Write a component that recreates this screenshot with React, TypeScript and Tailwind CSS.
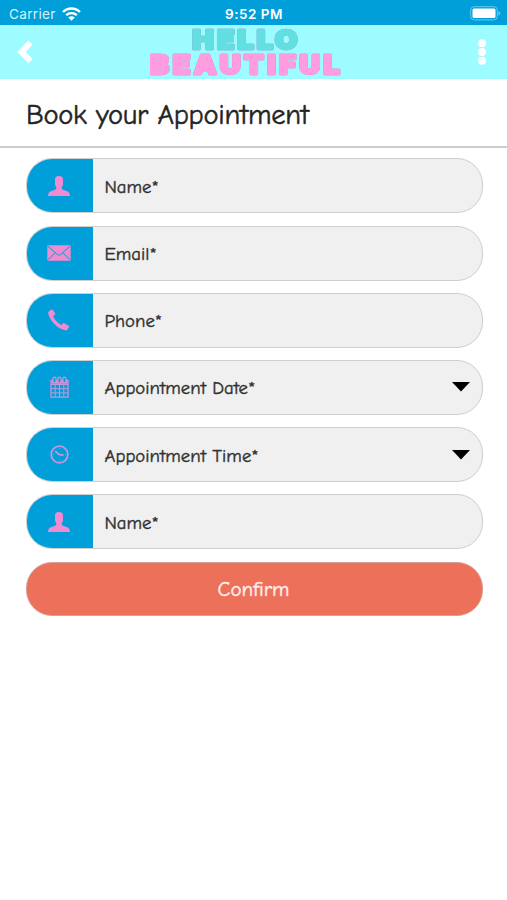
import type { ReactNode } from "react";

interface FieldProps {
  icon: ReactNode;
  label: string;
  dropdown?: boolean;
}

const UserIcon = () => (
  <svg width="22" height="20" viewBox="0 0 22 20" fill="#f18bd0">
    <path d="M11 0c2.900 0 4.100 1.400 4 4v4.300c0 1.400-.9 2.200-1.300 2.800v1.500c.2 1.200 2.900 1.700 5 2.500 2.200.8 3.100 1.900 3.300 4.900H0c.2-3 1.100-4.100 3.300-4.900 2.100-.8 4.800-1.300 5-2.500v-1.500C7.900 10.500 7 9.700 7 8.300V4c-.1-2.600 1.100-4 4-4z" />
  </svg>
);

const MailIcon = () => (
  <svg width="24" height="16" viewBox="0 0 24 16">
    <rect x="0.300" y="0.300" width="23.400" height="15.400" rx="1.200" fill="#f18bd0" />
    <path d="M1 1.200l9.300 8.200c1.100 1 2.300 1 3.400 0L23 1.200M1.200 14.700l7-7M22.800 14.700l-7-7" fill="none" stroke="#3f9fd8" strokeWidth="1.200" />
  </svg>
);

const PhoneIcon = () => (
  <svg width="22" height="22" viewBox="0 0 22 22" fill="#f18bd0">
    <path d="M.8 2.600L3.400.7c.6-.4 1.200-.3 1.600.3l2 3.300c.4.6.2 1.100-.3 1.500L5.200 7c.7 3 4.900 7.500 8.300 8.900l1.500-1.400c.5-.5 1-.5 1.600-.1l4.100 2.300c.6.400.7.900.3 1.500l-1.900 2.500c-.6.700-1.300.9-2.300.6C9.300 19.300 2.200 12.200.4 5 .1 4 .1 3.200.8 2.600z" />
  </svg>
);

const CalendarIcon = () => (
  <svg width="19" height="22" viewBox="0 0 19 22" fill="none" stroke="#c994d8">
    <path d="M1 4.500h17v16.700H1z" strokeWidth="1.300" />
    <path d="M1 8.500h17M1 12.700h17M1 16.900h17M5.200 8v13M9.500 8v13M13.800 8v13" strokeWidth="1" />
    <path d="M1.500 4.800h16v3h-16z" fill="#c994d8" stroke="none" />
    <path d="M3 6V2.600a1.500 1.500 0 0 1 3 0V6M8 6V2.600a1.500 1.500 0 0 1 3 0V6M13 6V2.600a1.500 1.500 0 0 1 3 0V6" strokeWidth="1.200" fill="#009fda" />
  </svg>
);

const ClockIcon = () => (
  <svg width="19" height="19" viewBox="0 0 19 19" fill="none" stroke="#c994d8">
    <circle cx="9.500" cy="9.500" r="8.300" strokeWidth="1.800" />
    <path d="M5.200 6.200l4.300 3.500 4 .3" strokeWidth="1.800" />
    <path d="M9.500 3v1M9.500 15v1M3 9.500h1M15 9.500h1" strokeWidth="0.700" />
  </svg>
);

function Field({ icon, label, dropdown }: FieldProps) {
  return (
    <div className="flex h-[55px] w-full items-center overflow-hidden rounded-[26px] border border-[#cfcfcf] bg-[#f0f0f0]">
      <div className="flex h-full w-[66px] shrink-0 items-center justify-center bg-[#009fda] pr-[2px]">{icon}</div>
      <span className="grow whitespace-nowrap pl-[11.5px] pt-[2px] text-[18.8px] leading-6 text-[#303030] [-webkit-text-stroke:0.4px_#303030]">
        {label}
      </span>
      {dropdown && (
        <svg className="mr-3 shrink-0" width="18" height="10" viewBox="0 0 18 10">
          <path d="M0 0h18L9 9.500z" fill="#000" />
        </svg>
      )}
    </div>
  );
}

function StatusBar() {
  return (
    <div className="flex h-[25px] items-center justify-between bg-[#009fda] pl-[8px] pr-[7px] pt-[2px] font-['Inter',sans-serif] text-[13px] leading-5 text-white">
      <div className="flex w-[150px] items-center gap-[6px] pl-px">
        <span className="text-[13.5px] tracking-[0.35px] text-[#d8f2fc]">Carrier</span>
        <svg width="19" height="14" viewBox="0 0 19 14" fill="none" stroke="#fff" strokeWidth="2.300">
          <path d="M1 5C5.700.300 13.300.300 18 5M4.200 8.200c3-2.900 7.600-2.900 10.600 0" />
          <path d="M6.300 10.500c1.800-1.700 4.600-1.700 6.400 0L9.500 13.800z" fill="#fff" stroke="none" />
        </svg>
      </div>
      <span className="text-[13.500px] font-semibold tracking-[0.5px]">9:52 PM</span>
      <div className="flex w-[150px] justify-end pb-[1px]">
        <svg className="-mr-px" width="31" height="15" viewBox="0 0 31 15">
          <rect x="0.700" y="0.700" width="26.600" height="13.200" rx="3.500" fill="none" stroke="#68c7eb" />
          <rect x="2.500" y="2.500" width="23" height="9.600" rx="1.500" fill="#fff" />
          <path d="M28.500 5c2.300.8 2.300 3.800 0 4.600z" fill="#68c7eb" />
        </svg>
      </div>
    </div>
  );
}

function Logo() {
  return (
    <svg
      width="196"
      height="54"
      viewBox="0 0 196 54"
      className="mr-[15px] font-['Inter','Liberation_Sans',sans-serif] font-black [filter:drop-shadow(0_0_0.7px_#b678c0)]"
      strokeLinejoin="round"
      strokeWidth="2.400"
    >
      <g transform="scale(1.130 1)">
        <text x="37.500" y="24.500" fontSize="25.500" textLength="93" lengthAdjust="spacing" fill="#62dfe1" stroke="#62dfe1">
          HELLO
        </text>
        <text x="0" y="49" fontSize="25.500" textLength="168" lengthAdjust="spacing" fill="#ff9ddf" stroke="#ff9ddf">
          BEAUTIFUL
        </text>
      </g>
    </svg>
  );
}

export default function App() {
  return (
    <div className="flex h-[900px] w-[507px] flex-col bg-white font-['Comic_Sans_MS','Comic_Neue','Lato',sans-serif]">
      <StatusBar />
      <header className="flex h-[54px] items-center justify-between bg-[#9cfcff] pl-[17px] pr-5">
        <svg width="17" height="24" viewBox="0 0 17 24" fill="none" stroke="#fff" strokeWidth="6">
          <path d="M13.500 2.500L4.500 11.800l9 9.400" />
        </svg>
        <Logo />
        <svg width="10" height="26" viewBox="0 0 10 26" fill="#fff">
          <circle cx="5" cy="4.300" r="4" />
          <circle cx="5" cy="13" r="4" />
          <circle cx="5" cy="21.800" r="4" />
        </svg>
      </header>
      <div className="flex h-[69px] items-center border-b-2 border-[#cdcdcd] pl-[26px] pt-1">
        <h1 className="whitespace-nowrap text-[28.5px] leading-9 tracking-[-0.25px] text-[#242424] [-webkit-text-stroke:0.5px_#242424]">
          Book your Appointment
        </h1>
      </div>
      <main className="flex flex-col gap-[12.2px] pl-[26px] pr-6 pt-[10.4px]">
        <Field icon={<UserIcon />} label="Name*" />
        <Field icon={<MailIcon />} label="Email*" />
        <Field icon={<PhoneIcon />} label="Phone*" />
        <Field icon={<CalendarIcon />} label="Appointment Date*" dropdown />
        <Field icon={<ClockIcon />} label="Appointment Time*" dropdown />
        <Field icon={<UserIcon />} label="Name*" />
        <button className="h-[54px] rounded-[26px] border border-[#d5a095] bg-[#ed705a] pr-[2px] pt-[3px] text-[21px] text-[#fff0eb] [-webkit-text-stroke:0.4px_#fff0eb]">
          Confirm
        </button>
      </main>
    </div>
  );
}
